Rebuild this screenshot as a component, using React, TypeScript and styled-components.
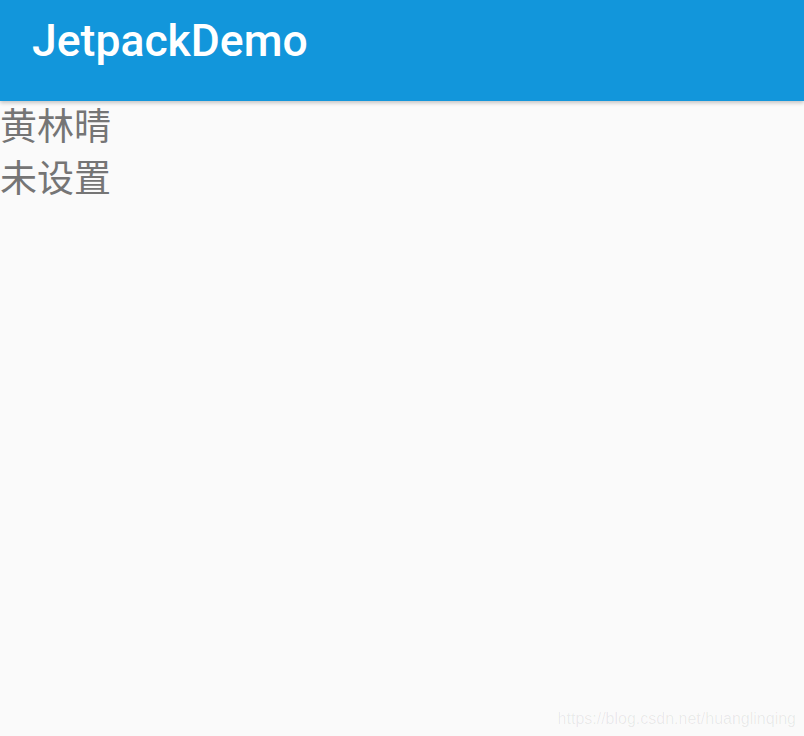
import React from "react";
import styled, { createGlobalStyle } from "styled-components";

const Global = createGlobalStyle`
  html, body { margin: 0; padding: 0; background: #fafafa; }
  #root { min-height: 736px; }
`;

const Page = styled.div`
  width: 804px;
  height: 736px;
  background: #fafafa;
  display: flex;
  flex-direction: column;
  position: relative;
  overflow: hidden;
`;

const AppBar = styled.header`
  height: 101px;
  flex: none;
  background: #1296db;
  box-shadow: 0 2px 4px rgba(0, 0, 0, 0.22);
  display: flex;
  align-items: flex-start;
  padding: 12px 0 0 32px;
  box-sizing: border-box;
  position: relative;
  z-index: 1;
`;

const Title = styled.h1`
  margin: 0;
  font-family: Roboto, "Liberation Sans", sans-serif;
  font-weight: 500;
  font-size: 44.5px;
  line-height: 58px;
  color: #ffffff;
`;

const Content = styled.main`
  display: flex;
  flex-direction: column;
  gap: 6px;
`;

const Line = styled.div`
  font-family: "Noto Sans CJK SC", "Noto Sans", sans-serif;
  font-size: 37px;
  line-height: 46px;
  color: #757575;
`;

const Watermark = styled.div`
  position: absolute;
  right: 8px;
  bottom: 8px;
  font-family: "Liberation Sans", Arial, sans-serif;
  font-size: 16px;
  color: rgba(0, 0, 0, 0.07);
`;

export default function App() {
  return (
    <>
      <Global />
      <Page>
        <AppBar>
          <Title>JetpackDemo</Title>
        </AppBar>
        <Content>
          <Line>黄林晴</Line>
          <Line>未设置</Line>
        </Content>
        <Watermark>https://blog.csdn.net/huanglinqing</Watermark>
      </Page>
    </>
  );
}
